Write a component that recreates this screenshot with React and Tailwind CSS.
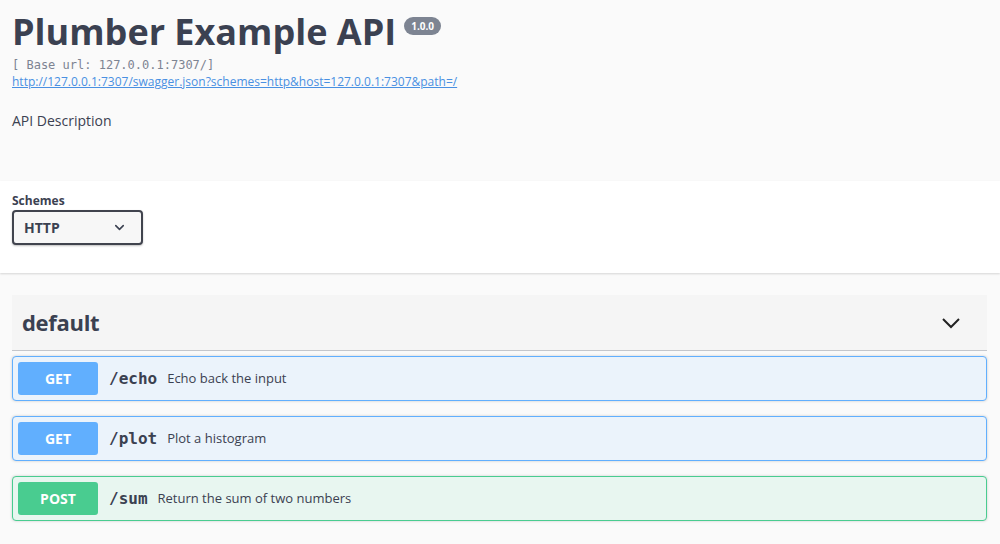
import { ChevronDown } from "lucide-react";

const ops = [
  { method: "GET", path: "/echo", desc: "Echo back the input" },
  { method: "GET", path: "/plot", desc: "Plot a histogram" },
  { method: "POST", path: "/sum", desc: "Return the sum of two numbers" },
];

function OpBlock({ method, path, desc }) {
  const get = method === "GET";
  return (
    <div
      className={
        get
          ? "flex items-center h-[45px] px-[5px] rounded-[4px] border border-[#61affe] bg-[#ebf3fb] shadow-[0_0_3px_rgba(0,0,0,0.19)]"
          : "flex items-center h-[45px] px-[5px] rounded-[4px] border border-[#49cc90] bg-[#e8f6f0] shadow-[0_0_3px_rgba(0,0,0,0.19)]"
      }
    >
      <div
        className={
          get
            ? "w-[80px] h-[33px] flex items-center justify-center rounded-[3px] bg-[#61affe] text-white text-[14px] font-bold"
            : "w-[80px] h-[33px] flex items-center justify-center rounded-[3px] bg-[#49cc90] text-white text-[14px] font-bold"
        }
      >
        {method}
      </div>
      <span className="ml-[11px] font-['DejaVu_Sans_Mono',monospace] font-bold text-[16px] text-[#3b4151]">
        {path}
      </span>
      <span className="ml-[10px] text-[13px] text-[#3b4151]">{desc}</span>
    </div>
  );
}

export default function App() {
  return (
    <div className="min-h-[544px] bg-[#fafafa] font-['Open_Sans',sans-serif] text-[#3b4151]">
      <div className="pl-[12px] pr-[13px] pt-[10px] h-[181px]">
        <div className="flex items-start">
          <h1 className="text-[36px] leading-[44px] font-bold text-[#3b4151]">Plumber Example API</h1>
          <span className="ml-[8px] mt-[7px] px-[7px] h-[18px] flex items-center rounded-full bg-[#7d8492] text-white text-[10px] font-bold">
            1.0.0
          </span>
        </div>
        <div className="mt-[3px] font-['DejaVu_Sans_Mono',monospace] text-[12px] leading-[16px] text-[#7d8492]">
          [ Base url: 127.0.0.1:7307/]
        </div>
        <a
          href="#"
          className="block text-[12px] leading-[18px] text-[#4990e2] underline"
        >
          http://127.0.0.1:7307/swagger.json?schemes=http&amp;host=127.0.0.1:7307&amp;path=/
        </a>
        <p className="mt-[20px] text-[14px] leading-[20px]">API Description</p>
      </div>

      <div className="bg-white h-[92px] pl-[12px] pt-[13px] shadow-[0_1px_2px_0_rgba(0,0,0,0.15)]">
        <div className="text-[12px] font-bold leading-[14px]">Schemes</div>
        <div className="mt-[2px] w-[131px] h-[35px] border-2 border-[#41444e] rounded-[4px] bg-[#f7f7f7] shadow-[0_1px_2px_0_rgba(0,0,0,0.25)] flex items-center justify-between pl-[10px] pr-[14px]">
          <span className="text-[14px] font-bold">HTTP</span>
          <ChevronDown size={15} strokeWidth={2.5} className="text-[#3b4151]" />
        </div>
      </div>

      <div className="pl-[12px] pr-[13px] pt-[22px]">
        <div className="h-[56px] bg-[#f5f5f5] border-b border-[#c4c6cb] flex items-center justify-between pl-[10px] pr-[26px]">
          <span className="text-[22px] font-bold tracking-[-0.3px]">default</span>
          <svg width="20" height="20" viewBox="0 0 20 20" className="text-[#222]">
            <path d="M2 6l8 8 8-8" fill="none" stroke="currentColor" strokeWidth="2" />
          </svg>
        </div>
        <div className="mt-[5px] flex flex-col gap-[15px]">
          {ops.map((o) => (
            <OpBlock key={o.path} {...o} />
          ))}
        </div>
      </div>
    </div>
  );
}
